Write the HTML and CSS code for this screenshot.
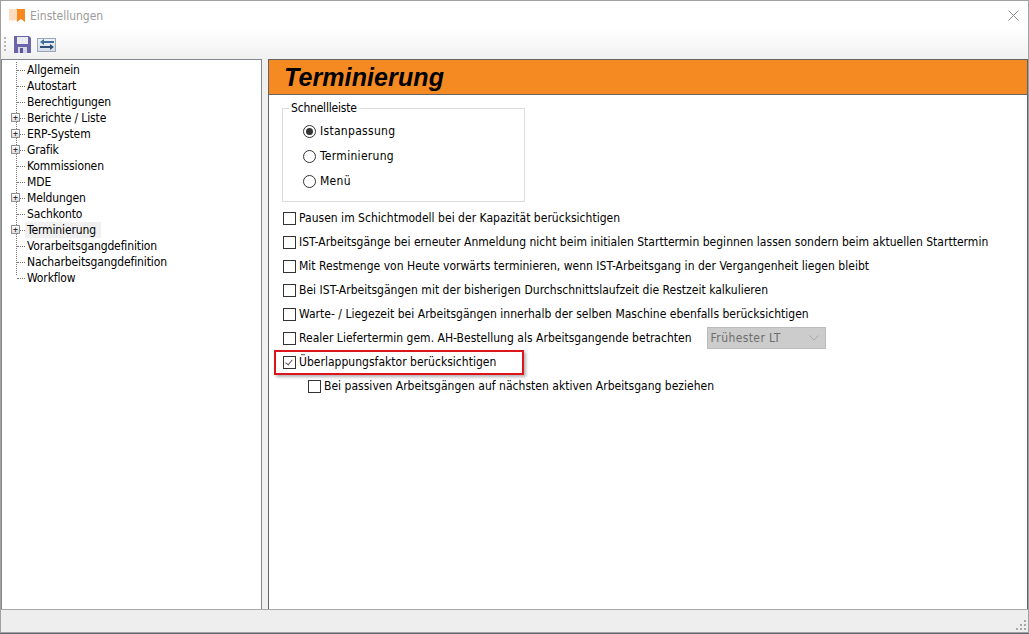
FILE: index.html
```html
<!DOCTYPE html>
<html>
<head>
	<meta charset="utf-8">
	<title>Einstellungen</title>
	<link rel="stylesheet" href="styles.css">
</head>
<body>
	<div class="window">
		<header class="titlebar">
			<svg class="title-icon" width="16" height="13" viewBox="0 0 16 13">
				<path d="M0 0h8v12l-2-1-2 1-2-1-2 1z" fill="#fbdcc0"/>
				<path d="M8 0h8v13l-4-3-4 3z" fill="#f7891f"/>
			</svg>
			<span class="title-text">Einstellungen</span>
			<svg class="close-icon" width="11" height="11" viewBox="0 0 11 11">
				<path d="M.5.5l10 10M10.500.5l-10 10" stroke="#8a8a8a" stroke-width="1" fill="none"/>
			</svg>
		</header>

		<div class="toolbar">
			<span class="grip"></span>
			<svg class="tool-save" width="17" height="17" viewBox="0 0 17 17">
				<path d="M0 0h15l2 2v15H0z" fill="#6a64a8"/>
				<path d="M3 1h11v7H3z" fill="#ecebf2"/>
				<path d="M4 11h9v6H4z" fill="#d7d6e6"/>
				<path d="M6 12h3v5H6z" fill="#5a5598"/>
			</svg>
			<span class="tool-swap">
				<svg width="14" height="11" viewBox="0 0 14 11">
					<path d="M4 0L0 3l4 3V4h10V2H4z" fill="#3c6e9e"/>
					<path d="M10 5l4 3-4 3V9H0V7h10z" fill="#2f4f78"/>
				</svg>
			</span>
		</div>

		<div class="content">
			<aside class="tree">
				<ul>
					<li>Allgemein</li>
					<li>Autostart</li>
					<li>Berechtigungen</li>
					<li class="node">Berichte / Liste</li>
					<li class="node">ERP-System</li>
					<li class="node">Grafik</li>
					<li>Kommissionen</li>
					<li>MDE</li>
					<li class="node">Meldungen</li>
					<li>Sachkonto</li>
					<li class="node current">Terminierung</li>
					<li>Vorarbeitsgangdefinition</li>
					<li>Nacharbeitsgangdefinition</li>
					<li>Workflow</li>
				</ul>
			</aside>

			<main class="panel">
				<h1 class="panel-title">Terminierung</h1>
				<div class="panel-body">
					<fieldset class="group">
						<legend>Schnellleiste</legend>
						<div class="radio checked">Istanpassung</div>
						<div class="radio">Terminierung</div>
						<div class="radio">Menü</div>
					</fieldset>

					<div class="check">Pausen im Schichtmodell bei der Kapazität berücksichtigen</div>
					<div class="check">IST-Arbeitsgänge bei erneuter Anmeldung nicht beim initialen Starttermin beginnen lassen sondern beim aktuellen Starttermin</div>
					<div class="check">Mit Restmenge von Heute vorwärts terminieren, wenn IST-Arbeitsgang in der Vergangenheit liegen bleibt</div>
					<div class="check">Bei IST-Arbeitsgängen mit der bisherigen Durchschnittslaufzeit die Restzeit kalkulieren</div>
					<div class="check">Warte- / Liegezeit bei Arbeitsgängen innerhalb der selben Maschine ebenfalls berücksichtigen</div>
					<div class="check">
						<span>Realer Liefertermin gem. AH-Bestellung als Arbeitsgangende betrachten</span>
						<div class="select">
							<span>Frühester LT</span>
							<svg width="10" height="6" viewBox="0 0 10 6"><path d="M.5.5L5 5 9.500.5" stroke="#a9a9a9" fill="none"/></svg>
						</div>
					</div>
					<div class="check checked">
						<span>Überlappungsfaktor berücksichtigen</span>
						<span class="marker"></span>
					</div>
					<div class="check sub">Bei passiven Arbeitsgängen auf nächsten aktiven Arbeitsgang beziehen</div>
				</div>
			</main>
		</div>

		<footer class="statusbar">
			<svg class="resize" width="10" height="10" viewBox="0 0 10 10">
				<path d="M8 0h2v2H8zM4 4h2v2H4zM8 4h2v2H8zM0 8h2v2H0zM4 8h2v2H4zM8 8h2v2H8z" fill="#a8a8a8"/>
			</svg>
		</footer>
	</div>
</body>
</html>
```

FILE: styles.css
```css
html, body {
	margin: 0;
	padding: 0;
	height: 100%;
	overflow: hidden;
}

body {
	background: #5c6a78;
	font: 12px/16px "DejaVu Sans Condensed", "DejaVu Sans", sans-serif;
	color: #000;
}

/* Window */
.window {
	width: 1029px;
	height: 633px;
	box-sizing: border-box;
	border: 1px solid #a0a0a0;
	background: #f0f0f0;
	display: flex;
	flex-direction: column;
}

.titlebar {
	height: 29px;
	flex: none;
	background: #fff;
	display: flex;
	align-items: center;
	padding: 0 9px 0 8px;
}

.title-icon {
	margin-right: 5px;
}

.title-text {
	color: #9a9a9a;
	flex: 1;
}

/* Toolbar */
.toolbar {
	height: 29px;
	flex: none;
	background: linear-gradient(#fff, #f0f0f0);
	display: flex;
	align-items: center;
	padding-left: 3px;
	box-sizing: border-box;
}

.grip {
	width: 2px;
	height: 16px;
	margin-right: 8px;
	background: repeating-linear-gradient(#b5b5b5 0 2px, transparent 2px 4px);
}

.tool-swap {
	width: 17px;
	height: 12px;
	margin-left: 6px;
	background: linear-gradient(#eef2f8, #d5deea);
	border: 1px solid #9aa6b8;
	display: flex;
	align-items: center;
	justify-content: center;
}

/* Content */
.content {
	flex: 1;
	display: flex;
	gap: 6px;
	min-height: 0;
}

.tree {
	width: 261px;
	height: 552px;
	flex: none;
	box-sizing: border-box;
	background: #fff;
	border: 1px solid #828790;
	padding-top: 2px;
}

.tree ul {
	list-style: none;
	margin: 0 0 0 14px;
	padding: 0;
	background: repeating-linear-gradient(#777 0 1px, transparent 1px 2px) 0 0 / 1px 214px no-repeat;
	letter-spacing: -.12px;
}

.tree li {
	position: relative;
	height: 16px;
	padding-left: 11px;
	white-space: nowrap;
}

.tree li::before {
	content: "";
	position: absolute;
	left: 1px;
	top: 8px;
	width: 8px;
	border-top: 1px dotted #777;
}

.tree .node::after {
	content: "+";
	position: absolute;
	left: -5px;
	top: 3px;
	width: 7px;
	height: 7px;
	border: 1px solid #919191;
	background: linear-gradient(#fff, #dcdcdc);
	font: 9px/7px "DejaVu Sans Mono", monospace;
	text-align: center;
	color: #222;
}

.tree .current {
	background: linear-gradient(#f0f0f0, #f0f0f0) 9px 0 / 76px 16px no-repeat;
}

.panel {
	flex: 1;
	height: 551px;
	box-sizing: border-box;
	background: #fff;
	border: 1px solid #646464;
	display: flex;
	flex-direction: column;
}

.panel-title {
	margin: 0;
	height: 35px;
	flex: none;
	box-sizing: border-box;
	background: #f68a22;
	border-bottom: 1px solid #646464;
	padding-left: 15px;
	font: italic bold 25px/34px "Liberation Sans", Arial, sans-serif;
	letter-spacing: .1px;
}

.panel-body {
	padding: 5px 0 0 13px;
}

/* Group box */
.group {
	width: 243px;
	height: 102px;
	box-sizing: border-box;
	margin: 0 0 4px;
	padding: 3px 0 0 20px;
	border: 1px solid #dcdcdc;
}

.group legend {
	padding: 0 2px;
	margin-left: -14px;
	letter-spacing: -.2px;
}

.radio {
	position: relative;
	height: 25px;
	line-height: 25px;
	padding-left: 17px;
	letter-spacing: .3px;
}

.radio::before {
	content: "";
	position: absolute;
	left: 0;
	top: 6px;
	width: 11px;
	height: 11px;
	border: 1px solid #333;
	border-radius: 50%;
}

.radio.checked::after {
	content: "";
	position: absolute;
	left: 3px;
	top: 9px;
	width: 7px;
	height: 7px;
	border-radius: 50%;
	background: #333;
}

/* Checkboxes */
.check {
	position: relative;
	height: 24px;
	margin-left: 1px;
	padding-left: 16px;
	display: flex;
	align-items: center;
	white-space: nowrap;
	letter-spacing: .02px;
}

.check::before {
	content: "";
	position: absolute;
	left: 0;
	top: 6px;
	width: 11px;
	height: 11px;
	border: 1px solid #333;
}

.check.checked::after {
	content: "";
	position: absolute;
	left: 4px;
	top: 8px;
	width: 3px;
	height: 6px;
	border: solid #555;
	border-width: 0 1px 1px 0;
	transform: rotate(40deg);
}

.check.sub {
	margin-left: 26px;
}

.marker {
	position: absolute;
	left: -9px;
	top: 0;
	width: 250px;
	height: 25px;
	box-sizing: border-box;
	border: 2px solid #dc141c;
	box-shadow: 2px 2px 3px rgba(0, 0, 0, .3);
}

.select {
	width: 119px;
	height: 22px;
	flex: none;
	margin-left: 15px;
	padding: 0 6px 0 3px;
	box-sizing: border-box;
	background: #cccccc;
	border: 1px solid #bbb;
	color: #6d6d6d;
	letter-spacing: .4px;
	display: flex;
	align-items: center;
	justify-content: space-between;
}

.statusbar {
	height: 20px;
	flex: none;
	background: #eeeeee;
	border-top: 1px solid #a8a8a8;
	display: flex;
	justify-content: flex-end;
	align-items: flex-end;
	padding: 0 2px 2px 0;
}
```
